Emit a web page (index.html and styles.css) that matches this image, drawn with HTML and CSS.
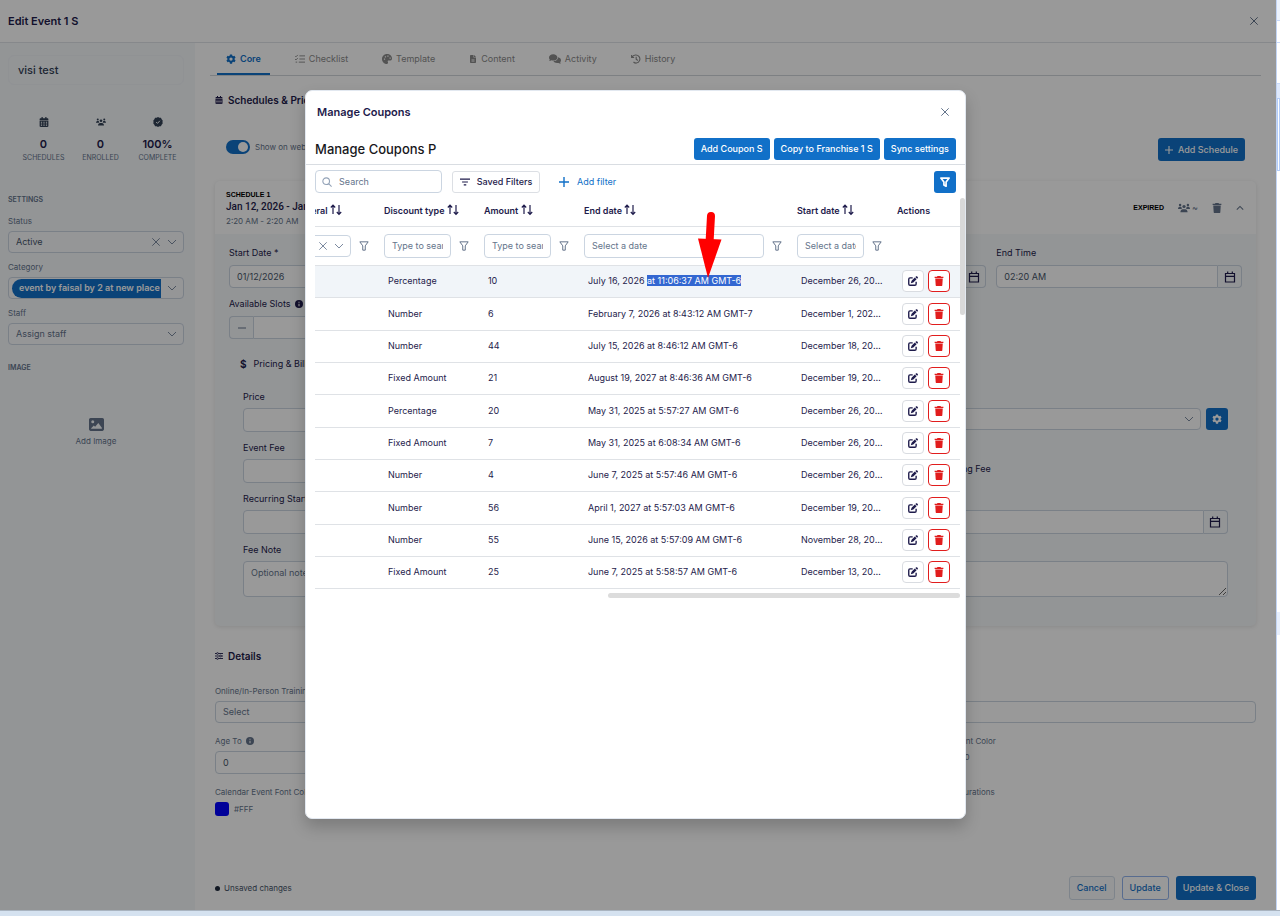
FILE: index.html
```html
<!DOCTYPE html>
<html lang="en">
<head>
    <meta charset="UTF-8">
    <meta name="viewport" content="width=device-width, initial-scale=1.0">
    <title>Edit Event</title>
    <link rel="stylesheet" href="styles.css">
</head>
<body>
    <svg class="sprite" aria-hidden="true">
        <symbol id="i-close" viewBox="0 0 10 10"><path d="M1.300 1.300l7.400 7.400M8.700 1.300L1.300 8.700" fill="none" stroke="currentColor" stroke-width="1"/></symbol>
        <symbol id="i-down" viewBox="0 0 10 10"><path d="M1 3l4 4 4-4" fill="none" stroke="currentColor" stroke-width="1"/></symbol>
        <symbol id="i-up" viewBox="0 0 10 10"><path d="M1 7l4-4 4 4" fill="none" stroke="currentColor" stroke-width="1.3"/></symbol>
        <symbol id="i-plus" viewBox="0 0 10 10"><path d="M5 0v10M0 5h10" fill="none" stroke="currentColor" stroke-width="1.4"/></symbol>
        <symbol id="i-minus" viewBox="0 0 10 10"><path d="M1 5h8" stroke="currentColor"/></symbol>
        <symbol id="i-gear" viewBox="0 0 16 16"><path fill="currentColor" fill-rule="evenodd" d="M6.3.6h3.4l.5 2.1 1.3.8 2.1-.7 1.7 3-1.6 1.4v1.6l1.6 1.4-1.7 3-2.1-.7-1.3.8-.5 2.1H6.300l-.5-2.100-1.300-.8-2.100.7-1.700-3 1.600-1.400V7.200L.7 5.800l1.700-3 2.100.7 1.300-.8zM8 5.400a2.600 2.600 0 100 5.200 2.600 2.600 0 000-5.200z"/></symbol>
        <symbol id="i-calendar" viewBox="0 0 14 16"><path fill="currentColor" fill-rule="evenodd" d="M3 0h2v2h4V0h2v2h1.500C13.300 2 14 2.700 14 3.500V5H0V3.500C0 2.700.7 2 1.500 2H3zM0 6h14v8.500c0 .8-.7 1.500-1.500 1.500h-11C.7 16 0 15.300 0 14.500zM2 7.500v1.700h2V7.500zM6 7.500v1.700h2V7.500zM10 7.500v1.700h2V7.500zM2 10.200V12h2v-1.800zM6 10.200V12h2v-1.800zM10 10.200V12h2v-1.800zM2 13v1.500h2V13zM6 13v1.500h2V13zM10 13v1.500h2V13z"/></symbol>
        <symbol id="i-date" viewBox="0 0 12 12"><path fill="none" stroke="currentColor" stroke-width="1.200" d="M1.500 2.500h9v8.500h-9zM1.500 5.300h9M3.700.5v2.500M8.300.5v2.500"/></symbol>
        <symbol id="i-users" viewBox="0 0 20 16"><g fill="currentColor"><circle cx="3.500" cy="3" r="2"/><circle cx="16.500" cy="3" r="2"/><circle cx="10" cy="5.500" r="2.700"/><path d="M0 9.500C0 7 1.500 6 3.500 6c1 0 1.800.2 2.400.7-.2 1.200.2 2.300.8 3H0zM20 9.500C20 7 18.500 6 16.500 6c-1 0-1.800.2-2.400.7.2 1.200-.2 2.300-.8 3H20zM4 15c0-3 2-4.800 4-4.800h4c2 0 4 1.800 4 4.800z"/></g></symbol>
        <symbol id="i-badge" viewBox="0 0 16 16"><path fill="currentColor" d="M8 0l2.200 1.100 2.500.1 1.100 2.300L15.500 5.500 15.200 8l.3 2.500-1.700 2-1.100 2.300-2.500.1L8 16l-2.200-1.100-2.500-.1-1.100-2.300L.5 10.500.8 8 .5 5.500l1.700-2 1.100-2.300 2.500-.1z"/><path d="M5 8l2.200 2.200L11 6" fill="none" stroke="#f5f8fb" stroke-width="1.600"/></symbol>
        <symbol id="i-list" viewBox="0 0 16 14"><path fill="none" stroke="currentColor" stroke-width="1.500" d="M0 2l1.500 1.500L4.500.500M0 7l1.500 1.500 3-3M1 12h2.500M7 2h9M7 7h9M6 12h10"/></symbol>
        <symbol id="i-palette" viewBox="0 0 16 16"><path fill="currentColor" fill-rule="evenodd" d="M8 0c4.500 0 8 3 8 7 0 2.500-2 3.500-4 3.500h-1.500c-1.300 0-1.800 1-1.200 2 .8 1.500.3 3.500-1.800 3.500C3.500 16 0 12.500 0 8s3.500-8 8-8zM3 7v2h2V7zM4.500 3.500v2h2v-2zM8.500 2.500v2h2v-2zM12 5.500v2h2v-2z"/></symbol>
        <symbol id="i-file" viewBox="0 0 12 16"><path fill="currentColor" fill-rule="evenodd" d="M0 1.500C0 .7.700 0 1.500 0H7v5h5v9.500c0 .8-.7 1.500-1.500 1.500h-9C.7 16 0 15.300 0 14.500zM8 0l4 4H8zM3 8v1h6V8zM3 10.500v1h6v-1zM3 13v1h6v-1z"/></symbol>
        <symbol id="i-chat" viewBox="0 0 20 16"><path fill="currentColor" d="M7 0c4 0 7 2.300 7 5.300s-3 5.200-7 5.200c-1 0-1.900-.1-2.700-.4C3 10.800 1.500 11.300 0 11.300c1-.9 1.300-1.800 1.300-2.500C.5 7.900 0 6.700 0 5.300 0 2.300 3 0 7 0z"/><path fill="currentColor" d="M15 5c3 .5 5 2.400 5 5 0 1.300-.5 2.400-1.300 3.300 0 .8.500 1.600 1.300 2.400-1.500 0-3-.5-4.200-1.200-3.800 1-7.300-.5-8.500-3C12 11.500 15.300 9 15 5z"/></symbol>
        <symbol id="i-history" viewBox="0 0 16 16"><path fill="none" stroke="currentColor" stroke-width="1.800" d="M1 1.500v4h4M1.800 5.200A6.500 6.500 0 118.500 14.500a6.500 6.500 0 01-4.500-1.700M8.300 4.500V8.500l2.700 2"/></symbol>
        <symbol id="i-sliders" viewBox="0 0 16 16"><path fill="none" stroke="currentColor" stroke-width="1.800" d="M0 3h16M0 8h16M0 13h16"/><g fill="#fff" stroke="currentColor" stroke-width="1.500"><circle cx="5" cy="3" r="1.800"/><circle cx="11" cy="8" r="1.800"/><circle cx="5" cy="13" r="1.800"/></g></symbol>
        <symbol id="i-image" viewBox="0 0 14 12"><path fill="currentColor" fill-rule="evenodd" d="M1.500 0h11c.8 0 1.500.7 1.500 1.500v9c0 .8-.7 1.500-1.500 1.500h-11C.7 12 0 11.300 0 10.500v-9C0 .7.700 0 1.500 0zM3.500 2a1.400 1.400 0 100 2.800 1.400 1.400 0 000-2.800zM2 10h10V9L8.700 4.500 5.700 8 4.500 7 2 9.500z"/></symbol>
        <symbol id="i-info" viewBox="0 0 12 12"><circle cx="6" cy="6" r="6" fill="currentColor"/><path d="M6 2.500v1.700M6 5.500v4" stroke="#fff" stroke-width="1.600"/></symbol>
        <symbol id="i-trash" viewBox="0 0 14 16"><path fill="currentColor" d="M4.500 0h5l.7 1H14v2H0V1h3.800zM1 4h12l-.7 10.600c0 .8-.7 1.400-1.500 1.400H3.200c-.8 0-1.400-.6-1.500-1.400z"/></symbol>
        <symbol id="i-edit" viewBox="0 0 16 16"><path fill="none" stroke="currentColor" stroke-width="2.200" d="M7.500 3H3.200C2 3 1.200 3.800 1.200 5v7.700c0 1.200.8 2 2 2H11c1.200 0 2-.8 2-2V9"/><path fill="currentColor" d="M12.800.6c.6-.5 1.400-.5 2 0l.7.8c.6.6.6 1.400 0 2l-1 1-2.800-2.800zM10.900 2.400l2.800 2.800-5.200 5.300-4 1.200 1.200-4z"/></symbol>
        <symbol id="i-search" viewBox="0 0 12 12"><path fill="none" stroke="currentColor" stroke-width="1.300" d="M5 1a4 4 0 110 8 4 4 0 010-8zM8 8l3.500 3.500"/></symbol>
        <symbol id="i-funnel" viewBox="0 0 12 12"><path fill="none" stroke="currentColor" stroke-width="1.200" stroke-linejoin="round" d="M1 1h10L7.500 5.800V11h-3V5.800z"/></symbol>
        <symbol id="i-funnel-bold" viewBox="0 0 12 12"><path fill="none" stroke="currentColor" stroke-width="2" stroke-linejoin="round" d="M1 1.300h10L7.300 6v5L4.700 9.500V6z"/></symbol>
        <symbol id="i-lines" viewBox="0 0 12 10"><path stroke="currentColor" stroke-width="1.400" d="M0 1.500h12M2.500 5h7M4.500 8.500h3"/></symbol>
        <symbol id="i-sort" viewBox="0 0 12 12"><path fill="none" stroke="currentColor" stroke-width="1.200" d="M3 10V1.500M.8 3.500L3 1.200l2.200 2.300M9 1v9M6.800 8L9 10.300l2.200-2.300"/></symbol>
    </svg>

    <div class="drawer">
        <header class="drawer-header">
            <h1>Edit Event 1 S</h1>
            <button class="icon-button" aria-label="Close"><svg class="i10"><use href="#i-close"/></svg></button>
        </header>

        <div class="drawer-body">
            <aside class="sidebar">
                <div class="event-name">visi test</div>
                <div class="stats">
                    <div class="stat"><svg class="i10"><use href="#i-calendar"/></svg><b>0</b><span>SCHEDULES</span></div>
                    <div class="stat"><svg class="i10"><use href="#i-users"/></svg><b>0</b><span>ENROLLED</span></div>
                    <div class="stat"><svg class="i10"><use href="#i-badge"/></svg><b>100%</b><span>COMPLETE</span></div>
                </div>
                <h3>SETTINGS</h3>
                <div class="side-field">
                    <label for="status">Status</label>
                    <div class="select-box">
                        <select id="status"><option>Active</option></select>
                        <svg class="i10"><use href="#i-close"/></svg>
                        <svg class="i10"><use href="#i-down"/></svg>
                    </div>
                </div>
                <div class="side-field">
                    <label for="category">Category</label>
                    <div class="select-box">
                        <button id="category" class="chip">event by faisal by 2 at new place</button>
                        <svg class="i10"><use href="#i-down"/></svg>
                    </div>
                </div>
                <div class="side-field">
                    <label for="staff">Staff</label>
                    <div class="select-box muted">
                        <select id="staff"><option>Assign staff</option></select>
                        <svg class="i10"><use href="#i-down"/></svg>
                    </div>
                </div>
                <h3 class="image-title">IMAGE</h3>
                <button class="add-image"><svg><use href="#i-image"/></svg>Add Image</button>
            </aside>

            <main class="main">
                <nav class="tabs">
                    <a href="#" class="tab active"><svg class="i10"><use href="#i-gear"/></svg>Core</a>
                    <a href="#" class="tab"><svg class="i10"><use href="#i-list"/></svg>Checklist</a>
                    <a href="#" class="tab"><svg class="i10"><use href="#i-palette"/></svg>Template</a>
                    <a href="#" class="tab"><svg class="i8"><use href="#i-file"/></svg>Content</a>
                    <a href="#" class="tab"><svg class="i12"><use href="#i-chat"/></svg>Activity</a>
                    <a href="#" class="tab"><svg class="i10"><use href="#i-history"/></svg>History</a>
                </nav>

                <div class="content">
                    <h2><svg class="i8"><use href="#i-calendar"/></svg>Schedules &amp; Pricing</h2>
                    <div class="schedule-bar">
                        <label class="toggle"><input type="checkbox" checked><i></i>Show on website</label>
                        <button class="btn primary tall"><svg class="i8"><use href="#i-plus"/></svg>Add Schedule</button>
                    </div>

                    <section class="card">
                        <div class="card-header">
                            <div>
                                <div class="schedule-no">SCHEDULE 1</div>
                                <div class="schedule-date">Jan 12, 2026 - Jan 12, 2026</div>
                                <div class="schedule-time">2:20 AM - 2:20 AM</div>
                            </div>
                            <div class="card-tools">
                                <span class="expired">EXPIRED</span>
                                <span class="people"><svg class="i12"><use href="#i-users"/></svg>~</span>
                                <svg class="i10"><use href="#i-trash"/></svg>
                                <svg class="i8"><use href="#i-up"/></svg>
                            </div>
                        </div>
                        <div class="card-body">
                            <div class="grid-4">
                                <div class="field"><label for="sd">Start Date *</label><div class="group"><input id="sd" value="01/12/2026"><button aria-label="Pick date"><svg class="i12"><use href="#i-date"/></svg></button></div></div>
                                <div class="field"><label for="st">Start Time</label><div class="group"><input id="st" value="02:20 AM"><button aria-label="Pick time"><svg class="i12"><use href="#i-date"/></svg></button></div></div>
                                <div class="field"><label for="ed">End Date</label><div class="group"><input id="ed" value="01/12/2026"><button aria-label="Pick date"><svg class="i12"><use href="#i-date"/></svg></button></div></div>
                                <div class="field"><label for="et">End Time</label><div class="group"><input id="et" value="02:20 AM"><button aria-label="Pick time"><svg class="i12"><use href="#i-date"/></svg></button></div></div>
                                <div class="field"><label for="slots">Available Slots <svg class="i8"><use href="#i-info"/></svg></label><div class="group slots"><button aria-label="Less"><svg class="i10"><use href="#i-minus"/></svg></button><input id="slots"></div></div>
                            </div>
                            <h4><span>$</span>Pricing &amp; Billing</h4>
                            <div class="grid-3">
                                <div class="field"><label for="price">Price</label><input id="price"></div>
                                <div class="field"><label for="cycle">Cycle</label><input id="cycle"></div>
                                <div class="field"><label for="coupons">&nbsp;</label>
                                    <div class="coupon-row">
                                        <div class="select-box"><select id="coupons"><option></option></select><svg class="i10"><use href="#i-down"/></svg></div>
                                        <button class="btn primary square" aria-label="Manage coupons"><svg class="i10"><use href="#i-gear"/></svg></button>
                                    </div>
                                </div>
                                <div class="field"><label for="fee">Event Fee</label><input id="fee"></div>
                                <div class="field"><label for="dep">Deposit</label><input id="dep"></div>
                                <label class="check"><input type="checkbox">Apply Billing Fee</label>
                                <div class="field"><label for="rs">Recurring Start</label><input id="rs"></div>
                                <div class="field"><label for="re">Recurring End</label><input id="re"></div>
                                <div class="field"><label for="nd">&nbsp;</label><div class="group"><input id="nd"><button aria-label="Pick date"><svg class="i12"><use href="#i-date"/></svg></button></div></div>
                            </div>
                            <div class="field note"><label for="note">Fee Note</label><textarea id="note" placeholder="Optional note"></textarea></div>
                        </div>
                    </section>

                    <h2 class="details-title"><svg class="i8"><use href="#i-sliders"/></svg>Details</h2>
                    <div class="details">
                        <div class="field wide"><label for="training">Online/In-Person Training</label><div class="select-box muted"><select id="training"><option>Select</option></select></div></div>
                        <div class="field"><label for="age">Age To <svg class="i8"><use href="#i-info"/></svg></label><input id="age" value="0"></div>
                        <div class="field"></div>
                        <div class="field"><span class="label">Calendar Event Color</span><div class="swatch plain">#0000A0</div></div>
                        <div class="field"><span class="label">Calendar Event Font Color</span><div class="swatch"><i></i>#FFF</div></div>
                        <div class="field"></div>
                        <div class="field"><span class="label">Event Configurations</span></div>
                    </div>

                    <footer class="footer">
                        <span class="unsaved"><i></i>Unsaved changes</span>
                        <button class="btn cancel">Cancel</button>
                        <button class="btn outline">Update</button>
                        <button class="btn primary">Update &amp; Close</button>
                    </footer>
                </div>
            </main>
        </div>

        <div class="backdrop">
            <div class="modal" role="dialog" aria-label="Manage Coupons">
                <div class="modal-header">
                    <h2>Manage Coupons</h2>
                    <button class="icon-button" aria-label="Close"><svg class="i10"><use href="#i-close"/></svg></button>
                </div>
                <div class="modal-title">
                    <h3>Manage Coupons P</h3>
                    <button class="btn primary">Add Coupon S</button>
                    <button class="btn primary">Copy to Franchise 1 S</button>
                    <button class="btn primary">Sync settings</button>
                </div>
                <div class="toolbar">
                    <label class="search"><svg class="i10"><use href="#i-search"/></svg><input type="search" placeholder="Search" aria-label="Search"></label>
                    <button class="btn saved"><svg class="i10"><use href="#i-lines"/></svg>Saved Filters</button>
                    <button class="btn add-filter"><svg class="i10"><use href="#i-plus"/></svg>Add filter</button>
                    <button class="btn primary square filter-toggle" aria-label="Filters"><svg class="i10"><use href="#i-funnel-bold"/></svg></button>
                </div>
                <div class="table-area">
                    <div class="table-scroll">
                        <table>
                            <colgroup><col class="c"><col class="c"><col class="c"><col class="c-end"><col class="c"><col class="c-act"></colgroup>
                            <thead>
                                <tr class="titles">
                                    <th>Is General <svg class="i12"><use href="#i-sort"/></svg></th>
                                    <th>Discount type <svg class="i12"><use href="#i-sort"/></svg></th>
                                    <th>Amount <svg class="i12"><use href="#i-sort"/></svg></th>
                                    <th>End date <svg class="i12"><use href="#i-sort"/></svg></th>
                                    <th>Start date <svg class="i12"><use href="#i-sort"/></svg></th>
                                    <th>Actions</th>
                                </tr>
                                <tr class="filters">
                                    <td><div class="filter"><div class="select-box"><select aria-label="General"><option></option></select><svg class="i10"><use href="#i-close"/></svg><svg class="i10"><use href="#i-down"/></svg></div><svg class="i10"><use href="#i-funnel"/></svg></div></td>
                                    <td><div class="filter"><input placeholder="Type to search" aria-label="Discount type"><svg class="i10"><use href="#i-funnel"/></svg></div></td>
                                    <td><div class="filter"><input placeholder="Type to search" aria-label="Amount"><svg class="i10"><use href="#i-funnel"/></svg></div></td>
                                    <td><div class="filter"><input placeholder="Select a date" aria-label="End date"><svg class="i10"><use href="#i-funnel"/></svg></div></td>
                                    <td><div class="filter"><input placeholder="Select a date" aria-label="Start date"><svg class="i10"><use href="#i-funnel"/></svg></div></td>
                                    <td></td>
                                </tr>
                            </thead>
                            <tbody id="coupons-body"></tbody>
                        </table>
                    </div>
                    <div class="v-thumb"></div>
                </div>
                <div class="h-thumb"></div>
                <svg class="arrow" viewBox="0 0 26 68"><path d="M14 5L12.500 32" stroke="#f00" stroke-width="8" stroke-linecap="round"/><path d="M1 27.500L24.500 28.500 11 67z" fill="#f00"/></svg>
            </div>
        </div>
    </div>
    <div class="page-edge">
        <i class="edge-a"></i><i class="edge-b"></i><i class="edge-c"></i><i class="edge-d"></i><i class="edge-e"></i><i class="edge-f"></i>
    </div>
    <div class="taskbar"></div>

    <script>
        const coupons = [
            ["Percentage", "10", "July 16, 2026 <mark>at 11:06:37 AM GMT-6</mark>", "December 26, 2025 at 5:57:27 AM"],
            ["Number", "6", "February 7, 2026 at 8:43:12 AM GMT-7", "December 1, 2025 at 8:43:12 AM"],
            ["Number", "44", "July 15, 2026 at 8:46:12 AM GMT-6", "December 18, 2025 at 8:46:12 AM"],
            ["Fixed Amount", "21", "August 19, 2027 at 8:46:36 AM GMT-6", "December 19, 2025 at 8:46:36 AM"],
            ["Percentage", "20", "May 31, 2025 at 5:57:27 AM GMT-6", "December 26, 2025 at 5:57:27 AM"],
            ["Fixed Amount", "7", "May 31, 2025 at 6:08:34 AM GMT-6", "December 26, 2025 at 6:08:34 AM"],
            ["Number", "4", "June 7, 2025 at 5:57:46 AM GMT-6", "December 26, 2025 at 5:57:46 AM"],
            ["Number", "56", "April 1, 2027 at 5:57:03 AM GMT-6", "December 19, 2025 at 5:57:03 AM"],
            ["Number", "55", "June 15, 2026 at 5:57:09 AM GMT-6", "November 28, 2025 at 5:57:09 AM"],
            ["Fixed Amount", "25", "June 7, 2025 at 5:58:57 AM GMT-6", "December 13, 2025 at 5:58:57 AM"]
        ];

        document.getElementById("coupons-body").innerHTML = coupons.map(c => `
            <tr>
                <td></td>
                ${c.map(text => `<td><div class="cell">${text}</div></td>`).join("")}
                <td>
                    <div class="row-actions">
                        <button aria-label="Edit"><svg class="i10"><use href="#i-edit"/></svg></button>
                        <button class="delete" aria-label="Delete"><svg class="i10"><use href="#i-trash"/></svg></button>
                    </div>
                </td>
            </tr>`).join("");
    </script>
</body>
</html>
```
FILE: styles.css
```css
* {
    box-sizing: border-box;
}
body {
    margin: 0;
    height: 100vh;
    display: grid;
    grid-template-columns: 1fr 4px;
    grid-template-rows: 1fr 6px;
    font-family: Inter, "Liberation Sans", sans-serif;
    font-size: 9px;
    line-height: 12px;
    color: #1e1b4b;
    overflow: hidden;
}
h1, h2, h3, h4 {
    margin: 0;
}
button, input, select, textarea {
    font: inherit;
    color: inherit;
    margin: 0;
}
button {
    padding: 0;
    border: none;
    background: none;
    cursor: pointer;
}
input, textarea {
    width: 100%;
    min-width: 0;
    border: 1px solid #cbd5e1;
    border-radius: 4px;
    background: #fff;
    color: #475569;
    padding: 0 7px;
    outline: none;
}
::placeholder {
    color: #64748b;
    opacity: 1;
}
svg {
    display: block;
    flex: none;
}
.sprite {
    position: absolute;
    width: 0;
    height: 0;
}
.i8 { width: 8px; height: 8px; }
.i10 { width: 10px; height: 10px; }
.i12 { width: 12px; height: 12px; }

.drawer {
    position: relative;
    display: flex;
    flex-direction: column;
    background: #fff;
    min-height: 0;
    overflow: hidden;
}
.drawer-header {
    display: flex;
    align-items: center;
    justify-content: space-between;
    height: 43px;
    padding: 0 17px 0 8px;
    border-bottom: 1px solid #dfe3e8;
}
.drawer-header h1 {
    font-size: 11px;
    font-weight: 600;
}
.icon-button {
    color: #64748b;
}
.drawer-body {
    flex: 1;
    display: flex;
    min-height: 0;
}

/* sidebar */
.sidebar {
    width: 195px;
    flex: none;
    padding: 12px 11px 0 8px;
    background: #f5f8fb;
    color: #64748b;
}
.event-name {
    height: 30px;
    padding: 0 9px;
    border: 1px solid #f0f3f7;
    border-radius: 6px;
    font-size: 11px;
    font-weight: 500;
    line-height: 28px;
    color: #334155;
}
.stats {
    display: grid;
    grid-template-columns: repeat(3, 57px);
    margin: 32px 0 32px 7px;
}
.stat {
    display: flex;
    flex-direction: column;
    align-items: center;
    color: #334155;
}
.stat b {
    margin-top: 10px;
    font-size: 11px;
    font-weight: 600;
    line-height: 14px;
    color: #1e1b4b;
}
.stat span {
    margin-top: 2px;
    font-size: 7px;
    line-height: 10px;
    color: #64748b;
}
.sidebar h3 {
    font-size: 7px;
    line-height: 10px;
    font-weight: 600;
    margin-bottom: 10px;
}
.side-field {
    margin-bottom: 8px;
}
.side-field label {
    display: block;
    font-size: 8px;
    margin-bottom: 4px;
}
.select-box {
    display: flex;
    align-items: center;
    gap: 6px;
    height: 22px;
    padding: 0 6px 0 7px;
    border: 1px solid #cbd5e1;
    border-radius: 4px;
    background: #fff;
    color: #7c8aa0;
}
.sidebar .select-box {
    background: #f8fafc;
}
.select-box select {
    flex: 1;
    min-width: 0;
    appearance: none;
    border: none;
    background: none;
    padding: 0;
    color: #475569;
    outline: none;
}
.select-box.muted select {
    color: #64748b;
}
.chip {
    flex: 1;
    min-width: 0;
    height: 19px;
    margin-left: -4px;
    padding-left: 7px;
    overflow: hidden;
    white-space: nowrap;
    text-align: left;
    border-radius: 10px 0 0 10px;
    background: #1170c8;
    color: #fff;
    font-weight: 600;
}
.sidebar .image-title {
    margin: 18px 0 0;
}
.add-image {
    display: flex;
    flex-direction: column;
    align-items: center;
    gap: 4px;
    width: 100%;
    margin-top: 45px;
    font-size: 8px;
}
.add-image svg {
    width: 15px;
    height: 13px;
}

/* main column */
.main {
    flex: 1;
    min-width: 0;
    display: flex;
    flex-direction: column;
    padding: 0 15px;
}
.tabs {
    display: flex;
    gap: 16px;
    height: 33px;
    padding-left: 7px;
    border-bottom: 1px solid #d1d5db;
}
.tab {
    display: flex;
    align-items: center;
    gap: 4px;
    padding: 2px 9px 0;
    border-bottom: 2px solid transparent;
    color: #8a8a8a;
    text-decoration: none;
}
.tab.active {
    color: #1170c8;
    border-color: #1170c8;
    font-weight: 600;
}
.content {
    flex: 1;
    display: flex;
    flex-direction: column;
    padding: 17px 5px 10px;
}
.content h2 {
    display: flex;
    align-items: center;
    gap: 5px;
    font-size: 10px;
    font-weight: 600;
    line-height: 14px;
}
.schedule-bar {
    display: flex;
    justify-content: space-between;
    align-items: flex-start;
    margin: 31px 11px 20px;
}
.toggle {
    display: flex;
    align-items: center;
    gap: 5px;
    height: 18px;
    font-size: 8px;
    color: #64748b;
}
.toggle input {
    position: absolute;
    width: 24px;
    opacity: 0;
}
.toggle i {
    width: 24px;
    height: 14px;
    padding: 2px;
    border-radius: 7px;
    background: #1170c8;
}
.toggle i::after {
    content: "";
    display: block;
    width: 10px;
    height: 10px;
    margin-left: 10px;
    border-radius: 50%;
    background: #fff;
}
.btn {
    display: flex;
    align-items: center;
    justify-content: center;
    gap: 5px;
    height: 22px;
    padding: 0 7px;
    border-radius: 3px;
    white-space: nowrap;
    font-weight: 500;
}
.btn.primary {
    background: #1170c8;
    color: #fff;
}
.btn.tall {
    height: 23px;
}
.btn.square {
    width: 22px;
    padding: 0;
}
.card {
    border-radius: 5px;
    background: #f5f8fb;
    box-shadow: 0 1px 4px rgba(0, 0, 0, 0.1);
}
.card-header {
    display: flex;
    justify-content: space-between;
    align-items: center;
    height: 53px;
    padding: 0 12px 0 11px;
    background: #fff;
    border-radius: 5px 5px 0 0;
}
.schedule-no, .expired {
    font-family: "Liberation Sans", sans-serif;
    font-size: 7px;
    font-weight: bold;
    color: #000;
}
.schedule-date {
    font-family: Roboto, sans-serif;
    font-size: 10px;
    font-weight: 500;
}
.schedule-time {
    margin-top: 2px;
    font-size: 8px;
    color: #64748b;
}
.card-tools {
    display: flex;
    align-items: center;
    gap: 14px;
    color: #64748b;
}
.people {
    display: flex;
    gap: 2px;
}
.card-body {
    padding: 13px 14px 29px;
}
.grid-4 {
    display: grid;
    grid-template-columns: repeat(4, 1fr);
    gap: 10px;
}
.grid-4 input {
    height: 23px;
}
.field label, .field .label {
    display: flex;
    align-items: center;
    gap: 4px;
    margin-bottom: 5px;
    font-size: 9px;
    white-space: nowrap;
}
.grid-4 label {
    margin-bottom: 6px;
}
.group {
    display: flex;
}
.group input {
    border-radius: 4px 0 0 4px;
}
.group button {
    display: flex;
    align-items: center;
    justify-content: center;
    width: 24px;
    flex: none;
    border: 1px solid #cbd5e1;
    border-left: none;
    border-radius: 0 4px 4px 0;
}
.slots button {
    border: 1px solid #cbd5e1;
    border-right: none;
    border-radius: 4px 0 0 4px;
    color: #64748b;
}
.slots input {
    border-radius: 0 4px 4px 0;
}
.card-body h4 {
    display: flex;
    gap: 7px;
    margin: 19px 0 21px 11px;
    font-size: 9px;
    font-weight: 400;
}
.card-body h4 span {
    font-weight: bold;
    font-size: 10px;
}
.grid-3 {
    display: grid;
    grid-template-columns: repeat(3, 1fr);
    gap: 10px;
    margin: 0 14px;
}
.grid-3 input {
    height: 24px;
}
.coupon-row {
    display: flex;
    gap: 5px;
}
.coupon-row .select-box {
    flex: 1;
}
.check {
    display: flex;
    align-items: center;
    gap: 4px;
    height: 41px;
    padding-top: 12px;
}
.grid-3 .check input {
    width: 10px;
    height: 10px;
}
.note {
    margin: 10px 14px 0;
}
.note textarea {
    display: block;
    height: 36px;
    padding: 5px 7px;
}
.content .details-title {
    margin: 23px 0 22px;
}
.details {
    display: grid;
    grid-template-columns: repeat(3, 1fr);
    gap: 12px 10px;
}
.details .wide {
    grid-column: 1 / -1;
}
.details label, .details .label {
    margin-bottom: 4px;
    font-size: 8px;
    color: #64748b;
}
.details input {
    height: 23px;
}
.swatch {
    display: flex;
    align-items: center;
    gap: 5px;
    font-size: 8px;
    color: #64748b;
}
.swatch i {
    width: 14px;
    height: 14px;
    border-radius: 3px;
    background: #0000ff;
}
.swatch.plain {
    padding-left: 18px;
}
.footer {
    display: flex;
    align-items: center;
    gap: 7px;
    margin-top: auto;
}
.unsaved {
    display: flex;
    align-items: center;
    gap: 4px;
    margin-right: auto;
    font-size: 8px;
    color: #475569;
}
.unsaved i {
    width: 5px;
    height: 5px;
    border-radius: 50%;
    background: #1e293b;
}
.footer .btn {
    height: 24px;
}
.cancel {
    border: 1px solid #d3dde8;
    background: #f8fafc;
    color: #1170c8;
}
.outline {
    border: 1px solid #93b4ee;
    color: #1170c8;
}

/* modal */
.backdrop {
    position: absolute;
    inset: 0;
    display: flex;
    justify-content: center;
    padding: 90px 5px 91px 0;
    background: rgba(0, 0, 0, 0.4);
}
.modal {
    position: relative;
    display: flex;
    flex-direction: column;
    width: 52%;
    background: #fff;
    border: 1px solid #e2e8f0;
    border-radius: 7px;
    box-shadow: 0 8px 16px rgba(0, 0, 0, 0.2);
}
.modal-header {
    display: flex;
    align-items: center;
    justify-content: space-between;
    height: 42px;
    padding: 0 15px 0 11px;
}
.modal-header h2 {
    font-size: 11px;
    font-weight: 600;
}
.modal-title {
    display: flex;
    align-items: center;
    gap: 4px;
    height: 32px;
    padding: 0 9px;
    border-bottom: 1px solid #d9dde2;
}
.modal-title h3 {
    margin-right: auto;
    font-size: 13px;
    font-weight: 500;
    color: #18181b;
}
.toolbar {
    display: flex;
    align-items: center;
    height: 33px;
    padding: 0 9px;
}
.search {
    display: flex;
    align-items: center;
    width: 127px;
    height: 23px;
    padding-left: 6px;
    border: 1px solid #cbd5e1;
    border-radius: 4px;
    color: #94a3b8;
}
.search input {
    border: none;
    background: none;
}
.saved {
    width: 88px;
    margin: 0 19px 0 10px;
    gap: 7px;
    border: 1px solid #dcdfe4;
    color: #1e1b4b;
}
.add-filter {
    padding: 0;
    gap: 8px;
    color: #1170c8;
    font-weight: 400;
}
.filter-toggle {
    margin-left: auto;
}
.table-area {
    display: flex;
    margin-left: 9px;
}
.table-scroll {
    flex: 1;
    min-width: 0;
    display: flex;
    justify-content: flex-end;
    overflow: hidden;
}
.v-thumb {
    width: 5px;
    height: 117px;
    border-radius: 3px;
    background: #d9d9d9;
}
.h-thumb {
    width: 352px;
    height: 5px;
    margin: 4px 5px 0 auto;
    border-radius: 3px;
    background: #dcdcdc;
}
table {
    flex: none;
    width: 681px;
    table-layout: fixed;
    border-collapse: collapse;
}
.c { width: 100px; }
.c-end { width: 213px; }
.c-act { width: 68px; }
th, td {
    padding: 0 0 0 5px;
    text-align: left;
    border-bottom: 1px solid #dfe2e6;
}
th {
    padding-bottom: 2px;
    font-weight: 600;
    white-space: nowrap;
}
th svg {
    display: inline-block;
    vertical-align: -2px;
}
.titles {
    height: 28px;
}
.filters {
    height: 39px;
}
.filter {
    display: flex;
    align-items: center;
    gap: 8px;
    padding-right: 10px;
    color: #64748b;
}
.filter input {
    height: 24px;
}
.filter .select-box {
    flex: 1;
    min-width: 0;
    padding-left: 0;
}
tbody tr {
    height: 32px;
}
tbody tr:nth-child(3n+2) {
    height: 33px;
}
tbody tr:first-child {
    background: #f1f5f9;
}
.cell {
    padding: 0 8px 0 4px;
    overflow: hidden;
    white-space: nowrap;
    text-overflow: ellipsis;
}
mark {
    background: #3367d1;
    color: #fff;
}
.row-actions {
    display: flex;
    gap: 4px;
    padding-left: 5px;
}
.row-actions button {
    display: flex;
    align-items: center;
    justify-content: center;
    width: 22px;
    height: 22px;
    background: #fff;
    border: 1px solid #d9dce1;
    border-radius: 4px;
}
.row-actions .delete {
    border-color: #e11d1d;
    color: #e11d1d;
}
.arrow {
    position: absolute;
    left: 391px;
    top: 120px;
    width: 26px;
    height: 68px;
}

/* what shows behind the drawer */
.page-edge {
    display: flex;
    flex-direction: column;
    background: #fff;
    border-left: 1px solid #c3d5f5;
}
.edge-a { height: 21px; background: #edf3fd; border-bottom: 1px solid #c9dafa; }
.edge-b { height: 22px; border-bottom: 1px solid #c9dafa; }
.edge-c { height: 41px; border-bottom: 1px solid #c9dafa; }
.edge-d { height: 14px; background: #dfe9fc; }
.edge-e { height: 73px; border: 1px solid #b4cdf8; }
.edge-f { height: 23px; margin-top: auto; margin-bottom: 275px; background: #e8effc; }
.taskbar {
    grid-column: 1 / -1;
    background: #d5e2f0;
    border-top: 1px solid #a9b4c0;
}
```
